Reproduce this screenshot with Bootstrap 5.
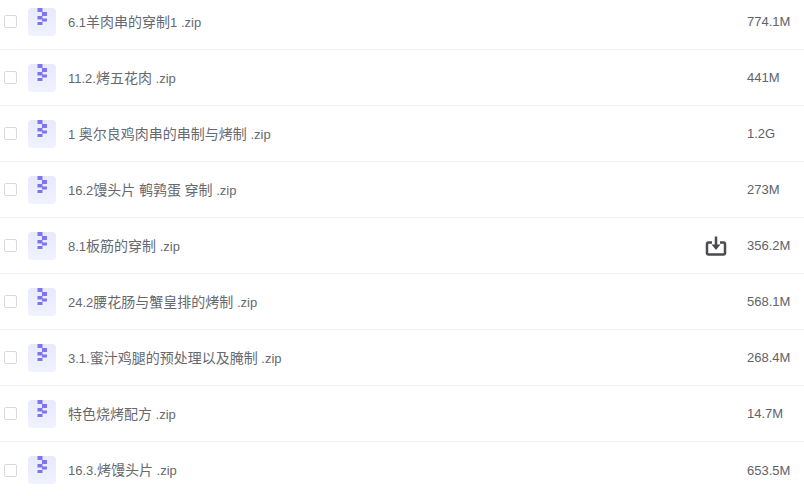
<!DOCTYPE html>
<html lang="zh">
<head>
    <meta charset="UTF-8">
    <meta name="viewport" content="width=device-width, initial-scale=1">
    <title>文件列表</title>
    <link rel="stylesheet" href="https://cdn.jsdelivr.net/npm/bootstrap@5.3.2/dist/css/bootstrap.min.css">
    <style>
        html, body { height: 496px; overflow: hidden; background: #fff; }
        body { font-family: "Liberation Sans", "Noto Sans CJK SC", sans-serif; }
        .file-list { margin-top: -6px; }
        .file-row { height: 56px; padding: 0 0 0 4px; border-color: #f3f3f5; }
        .file-check.form-check-input { width: 13px; height: 13px; margin: 0 11px 0 0; border: 1px solid #d9d9dc; border-radius: 2px; flex: none; }
        .zip-icon { width: 28px; height: 28px; margin-right: 12px; flex: none; display: block; }
        .file-name { font-size: 13px; color: #666970; flex: 1 1 auto; white-space: pre; padding-top: 1px; }
        .file-name .cjk { font-size: 14px; }
        .file-size { font-size: 13px; color: #5f626a; width: 57px; flex: none; padding-top: 1px; }
        .down-btn { width: 22px; height: 22px; margin-right: 20px; flex: none; display: block; }
    </style>
</head>
<body>

    <ul class="list-group list-group-flush file-list" id="files"></ul>

    <script src="https://cdn.jsdelivr.net/npm/bootstrap@5.3.2/dist/js/bootstrap.bundle.min.js"></script>
    <script>
        const files = [
            ["6.1羊肉串的穿制1 .zip", "774.1M"],
            ["11.2.烤五花肉 .zip", "441M"],
            ["1 奥尔良鸡肉串的串制与烤制 .zip", "1.2G"],
            ["16.2馒头片 鹌鹑蛋 穿制 .zip", "273M"],
            ["8.1板筋的穿制 .zip", "356.2M", true],
            ["24.2腰花肠与蟹皇排的烤制 .zip", "568.1M"],
            ["3.1.蜜汁鸡腿的预处理以及腌制 .zip", "268.4M"],
            ["特色烧烤配方 .zip", "14.7M"],
            ["16.3.烤馒头片 .zip", "653.5M"]
        ];

        const zipIcon = `<svg class="zip-icon" viewBox="0 0 28 28">
            <defs><linearGradient id="tile" x1="0" y1="0" x2="0" y2="1"><stop offset="0" stop-color="#e8e9fd"/><stop offset="1" stop-color="#f1f1fe"/></linearGradient></defs>
            <rect width="28" height="28" rx="4" fill="url(#tile)"/>
            <path fill="#7c75f0" d="M9.500 0h5v4h-5z"/>
            <path fill="#7c75f0" d="M14 4h5v4h-5z"/>
            <path fill="#7c75f0" d="M9.500 8h5v3.500h-5z"/>
            <path fill="#7c75f0" d="M14 10.500h5v3h-5z"/>
            <path fill="#7c75f0" d="M9.500 14h5v3h-5z"/>
        </svg>`;

        const downIcon = `<svg class="down-btn" viewBox="0 0 22 22" fill="none" stroke="#4b4b4f" stroke-width="2.500">
            <path d="M7 7.500H3.500a1.500 1.500 0 0 0-1.500 1.500v9a1.500 1.500 0 0 0 1.500 1.500h15a1.500 1.500 0 0 0 1.500-1.500v-9a1.500 1.500 0 0 0-1.500-1.500H15"/>
            <path d="M11 1.500v9"/>
            <path fill="#4b4b4f" stroke="none" d="M6.500 9.500h9L11 15z"/>
        </svg>`;

        // CJK runs sit a pixel larger than the latin part of the name
        const nameHtml = name => name.replace(/[\u4e00-\u9fff]+/g, m => `<span class="cjk">${m}</span>`);

        document.getElementById("files").innerHTML = files.map(f => `
            <li class="list-group-item d-flex align-items-center file-row">
                <input class="form-check-input file-check" type="checkbox">
                ${zipIcon}
                <span class="file-name">${nameHtml(f[0])}</span>
                ${f[2] ? downIcon : ""}
                <span class="file-size">${f[1]}</span>
            </li>`).join("");
    </script>

</body>
</html>
